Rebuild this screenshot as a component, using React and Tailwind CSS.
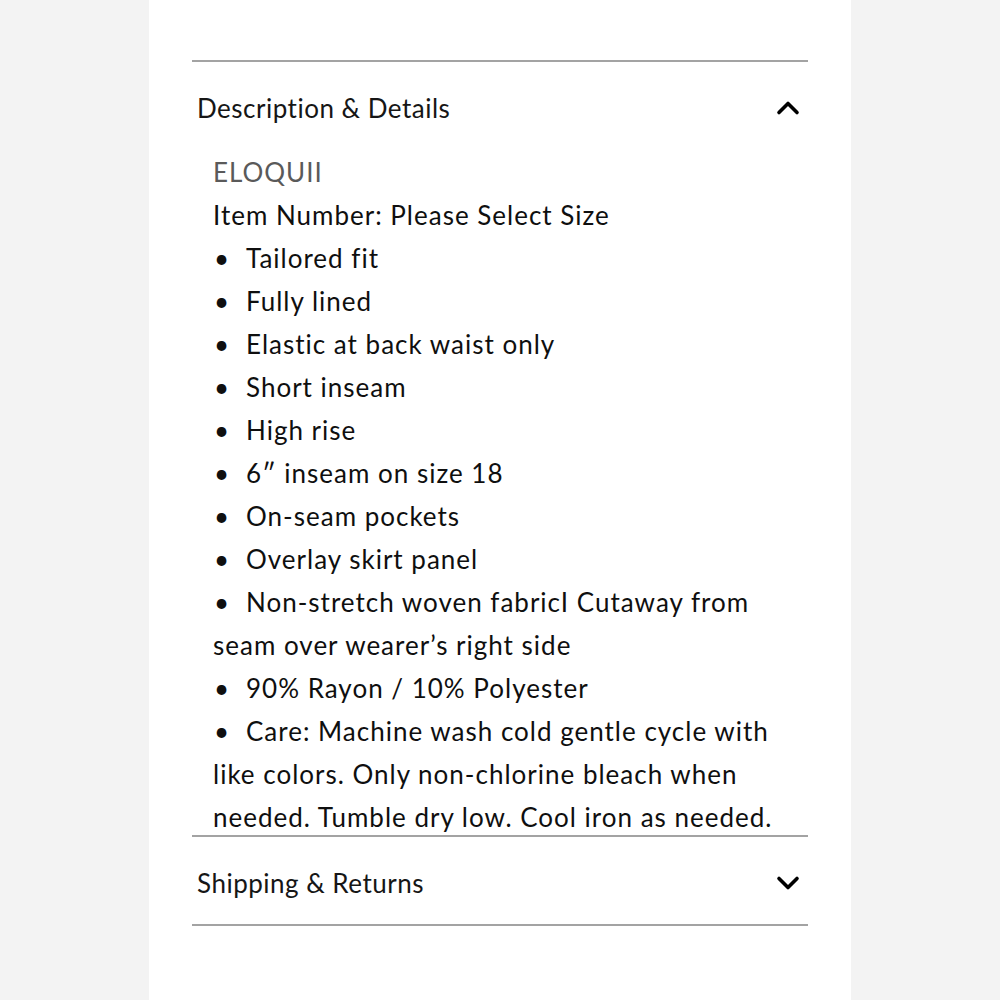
import React from 'react';
import { ChevronUp, ChevronDown } from 'lucide-react';

// each entry is one bullet; inner arrays are the visual lines it wraps to
const bullets = [
  ['Tailored fit'],
  ['Fully lined'],
  ['Elastic at back waist only'],
  ['Short inseam'],
  ['High rise'],
  ['6″ inseam on size 18'],
  ['On-seam pockets'],
  ['Overlay skirt panel'],
  ['Non-stretch woven fabricI Cutaway from', 'seam over wearer’s right side'],
  ['90% Rayon / 10% Polyester'],
  [
    'Care: Machine wash cold gentle cycle with',
    'like colors. Only non-chlorine bleach when',
    'needed. Tumble dry low. Cool iron as needed.',
  ],
];

const App = () => {
  return (
    <div
      className="min-h-screen flex justify-center bg-[#f3f3f3]"
      style={{ fontFamily: 'Lato, "Noto Sans", sans-serif' }}
    >
      <div className="w-[702px] bg-white px-[43px] pt-[60px] h-[1000px]">
        <div className="border-t-2 border-[#a3a3a3]">
          {/* Description header */}
          <div className="flex items-center justify-between pl-[5px] pr-[2px] pt-[31px] pb-[28px]">
            <span className="text-[26px] leading-[30px] tracking-[0.5px] text-[#161616]">Description &amp; Details</span>
            <ChevronUp size={36} strokeWidth={2.4} className="text-black -my-[3px]" />
          </div>

          <div className="pl-[21px] pr-[10px] mb-[-4px] text-[26px] leading-[43px] tracking-[1px] text-[#0f0f0f] whitespace-nowrap">
            <div className="text-[#5a5a5a]">ELOQUII</div>
            <div>Item Number: Please Select Size</div>
            {bullets.map((lines) => (
              <div key={lines[0]}>
                <span className="inline-block w-[33px] pl-[1px]">•</span>
                {lines.map((l, i) => (
                  <React.Fragment key={l}>
                    {i > 0 && <br />}
                    {l}
                  </React.Fragment>
                ))}
              </div>
            ))}
          </div>
        </div>

        <div className="border-t-2 border-b-2 border-[#a3a3a3]">
          <div className="flex items-center justify-between pl-[5px] pr-[2px] pt-[4px] h-[87px]">
            <span className="text-[26px] leading-[30px] tracking-[0.5px] text-[#161616]">Shipping &amp; Returns</span>
            <ChevronDown size={36} strokeWidth={2.4} className="text-black -my-[3px]" />
          </div>
        </div>
      </div>
    </div>
  );
};

export default App;
